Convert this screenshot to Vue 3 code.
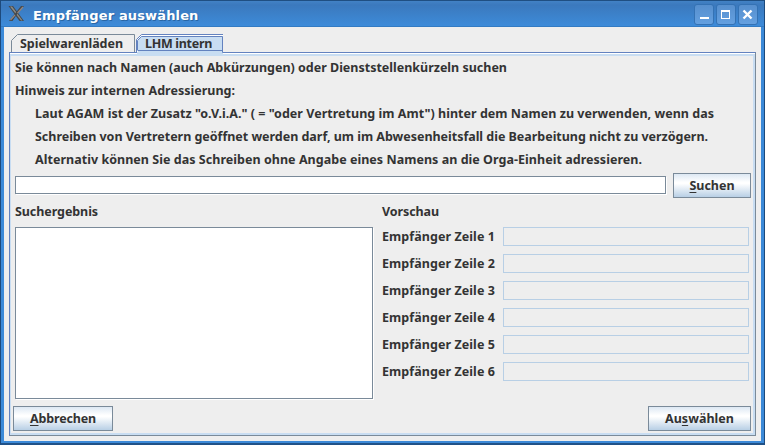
<script setup>
import { ref } from 'vue'

const hints = [
  { text: 'Sie können nach Namen (auch Abkürzungen) oder Dienststellenkürzeln suchen', width: 492 },
  { text: 'Hinweis zur internen Adressierung:', width: 220 },
  { text: 'Laut AGAM ist der Zusatz "o.V.i.A." ( = "oder Vertretung im Amt") hinter dem Namen zu verwenden, wenn das', width: 679, indent: true },
  { text: 'Schreiben von Vertretern geöffnet werden darf, um im Abwesenheitsfall die Bearbeitung nicht zu verzögern.', width: 673, indent: true },
  { text: 'Alternativ können Sie das Schreiben ohne Angabe eines Namens an die Orga-Einheit adressieren.', width: 607, indent: true },
]
const query = ref('')

// Tracks the glyphs of a label so that it fills the given width.
const vFit = {
  mounted(el, { value }) {
    const width = el.getBoundingClientRect().width
    el.style.letterSpacing = (value - width) / el.textContent.length + 'px'
  },
}
</script>

<template>
  <div class="window">
    <header class="titlebar">
      <svg class="logo" width="17" height="17" viewBox="0 0 17 17">
        <path d="M.5 1h4.500L16 16h-4.500z" fill="#46494c" />
        <path d="M2 1.500h2L14.500 15.500h-1.500z" fill="#8b8d88" />
        <path d="M13 1h3L9.500 8.500 4.500 16H1L7.500 8z" fill="#46494c" />
        <path d="M15 2L9.500 8M7 10L2.500 15" stroke="#95867d" stroke-width="1.200" />
      </svg>
      <span v-fit="165.5" class="title">Empfänger auswählen</span>
      <div class="controls">
        <span class="control"><svg width="18" height="19"><path d="M5 12h9v2H5z" fill="#fff" /></svg></span>
        <span class="control"><svg width="18" height="19"><path d="M4 5h9v9H4zM5 7v6h7V7z" fill="#fff" fill-rule="evenodd" /></svg></span>
        <span class="control"><svg width="18" height="19"><path d="M4.500 5.500l8 8M12.500 5.500l-8 8" stroke="#fff" stroke-width="2.400" /></svg></span>
      </div>
    </header>

    <main class="body">
      <nav class="tabs">
        <div class="tab first">
          <svg class="tab-shape" width="124" height="18"><path d="M.5 18V6.500L6.500.5H123.500V18" fill="#eee" stroke="#7a8a99" /></svg>
          <span v-fit="103">Spielwarenläden</span>
        </div>
        <div class="tab second">
          <svg class="tab-shape" width="88" height="21">
            <path d="M1 21V6L5 2H87V21z" fill="#c8ddf2" />
            <path d="M.5 18V5.500L5.500.5H87" fill="none" stroke="#6382bf" />
            <path d="M1.500 18V5.500L5.500 1.500H87" fill="none" stroke="#fff" />
            <path d="M1.500 16.500V6.500L5.500 2.500H86.500V18.500H88M2 16.500H86" fill="none" stroke="#6382bf" />
          </svg>
          <span v-fit="67">LHM intern</span>
        </div>
      </nav>

      <section class="pane">
        <p v-for="h in hints" :key="h.text" class="hint" :class="{ indent: h.indent }">
          <span v-fit="h.width">{{ h.text }}</span>
        </p>

        <div class="search">
          <input v-model="query" class="query" />
          <button class="btn search-btn"><span v-fit="45"><u>S</u>uchen</span></button>
        </div>

        <div class="columns">
          <div class="results">
            <h2><span v-fit="83">Suchergebnis</span></h2>
            <div class="list"></div>
          </div>
          <div class="preview">
            <h2><span v-fit="57">Vorschau</span></h2>
            <div v-for="n in 6" :key="n" class="row">
              <label><span v-fit="113">Empfänger Zeile {{ n }}</span></label>
              <div class="field"></div>
            </div>
          </div>
        </div>

        <footer class="actions">
          <button class="btn cancel"><span v-fit="66"><u>A</u>bbrechen</span></button>
          <button class="btn choose"><span v-fit="69">Au<u>s</u>wählen</span></button>
        </footer>
      </section>
    </main>
  </div>
</template>

<style>
body { margin: 0; }
</style>

<style scoped>
* { box-sizing: border-box; }
.window {
  width: 765px; height: 445px; padding: 0 3px 2px; overflow: hidden;
  background: #3c8ad8; border: 1px solid #1d4a7c; border-top: 0; border-bottom: 2px solid #205288;
  font: bold 12.500px/23px "Noto Sans", "Open Sans", sans-serif; color: #333; white-space: nowrap;
}
.titlebar {
  display: flex; height: 27px; margin: 0 -3px; padding: 4px 6px 0 7px;
  background: linear-gradient(#1f4f82 0 1px, #4282c5 1px, #3b79bd 5px, #3d8bd9 26px, #337bc3 26px);
}
.logo { margin-top: 1px; }
.title { margin-left: 8px; font: bold 13px/23px "DejaVu Sans", sans-serif; color: #fff; text-shadow: 1px 1px 0 #2865a4; }
.controls { display: flex; gap: 2px; margin-left: auto; }
.control {
  width: 20px; height: 21px; border: 1px solid #3472b4; border-radius: 3px;
  background: linear-gradient(#568fce, #64a0e0);
}
.control svg { display: block; }
.body { height: 414px; padding: 7px 5px 5px; background: #eee; }
.tabs { display: flex; height: 18px; padding-left: 2px; }
.tab { position: relative; height: 18px; line-height: 19px; }
.tab span { position: relative; display: inline-block; z-index: 2; }
.tab-shape { position: absolute; left: 0; top: 0; z-index: 1; }
.first { width: 124px; padding-left: 9px; }
.second { width: 88px; padding-left: 9px; margin-left: 1px; }
.pane {
  height: 384px; background: #eee; padding: 0 3px 0 1px;
  border: 1px solid #6382bf; border-right-color: #7a8a99; border-bottom-color: #7a8a99;
  box-shadow: inset 0 1px #fff, inset 0 3px #c8ddf2, inset 1px 0 #c8ddf2, inset -2px -2px #c8ddf2;
}
.hint { height: 23px; margin: 0; padding-left: 4px; line-height: 29px; }
.hint.indent { padding-left: 24px; }
.search { display: flex; height: 31px; padding: 5px 0 0 4px; }
.query { width: 651px; height: 18px; margin-top: 3px; padding: 0 3px; border: 1px solid #7a8a99; box-shadow: 1px 1px #fff; font: inherit; border-radius: 0; outline: 0; }
.btn {
  height: 25px; padding: 0; border: 1px solid #7a8a99;
  background: linear-gradient(#dde8f3, #fff 36%, #fff 42%, #b8cfe5);
  font: inherit; line-height: 22px; color: #333; white-space: nowrap; border-radius: 0;
}
.btn u { text-underline-offset: 2px; text-decoration-thickness: 1px; }
.search-btn { width: 78px; margin: 0 0 0 7px; flex: none; }
.columns { display: flex; height: 207px; padding-left: 4px; }
h2 { height: 26px; margin: 0; font: inherit; line-height: 25px; }
.results { width: 358px; }
.list { height: 172px; margin-top: 2px; background: #fff; border: 1px solid #7a8a99; box-shadow: 1px 1px #fff; }
.preview { width: 367px; margin-left: 9px; }
.row { display: flex; height: 27px; padding-top: 2px; line-height: 19px; }
.row label { width: 121px; flex: none; }
.field { width: 246px; height: 19px; border: 1px solid #b8cfe5; }
.actions { display: flex; justify-content: space-between; padding: 0 1px 0 2px; }
.cancel { width: 100px; }
.choose { width: 103px; }
</style>
